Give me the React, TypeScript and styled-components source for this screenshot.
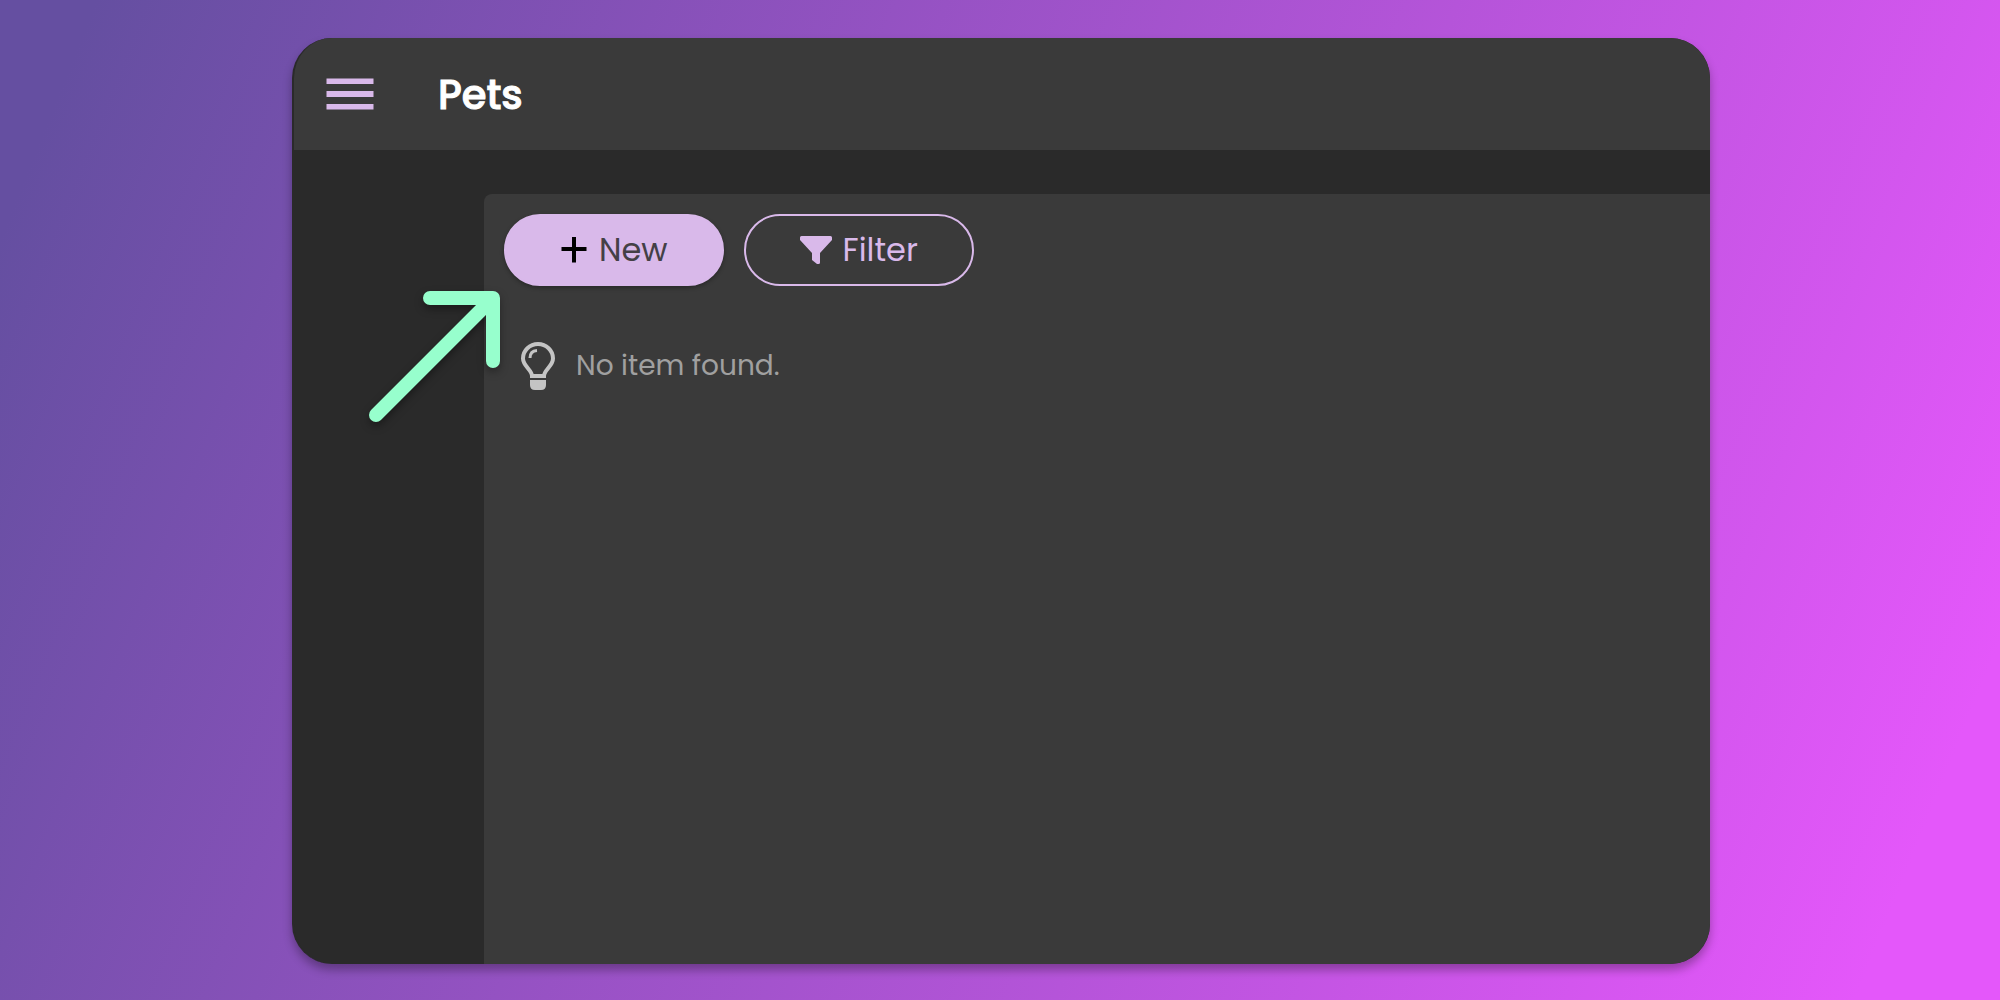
import React from "react";
import styled, { createGlobalStyle } from "styled-components";

const accent = "#d9b9ea";
const surface = "#3a3a3a";
const backdrop = "#2a2a2a";
const mint = "#97ffcd";

const GlobalStyle = createGlobalStyle`
  *, *::before, *::after { box-sizing: border-box; }
  body {
    margin: 0;
    font-family: Poppins, Inter, "Open Sans", sans-serif;
  }
`;

const Page = styled.main`
  display: flex;
  min-height: 100vh;
  padding: 38px 290px 36px 292px;
  background: linear-gradient(112deg, #654fa1 4%, #e457fa 94%);
`;

const Card = styled.section`
  position: relative;
  display: flex;
  flex: 1;
  flex-direction: column;
  min-width: 0;
  overflow: hidden;
  border-left: 2px solid ${backdrop};
  border-radius: 40px;
  background: ${backdrop};
  box-shadow: 0 6px 10px rgba(0, 0, 0, 0.3);
`;

const Header = styled.header`
  display: flex;
  align-items: center;
  gap: 64px;
  height: 112px;
  padding: 0 32px;
  background: ${surface};
`;

const MenuButton = styled.button`
  display: flex;
  padding: 0;
  border: 0;
  background: none;
  color: ${accent};
`;

const Title = styled.h1`
  margin: 0;
  padding-top: 2px;
  color: #ffffff;
  font-size: 40px;
  font-weight: 500;
  line-height: 60px;
  -webkit-text-stroke: 1px #ffffff;
`;

const Panel = styled.div`
  display: flex;
  flex: 1;
  flex-direction: column;
  gap: 56px;
  margin: 44px 0 0 190px;
  padding: 20px;
  border-top-left-radius: 8px;
  background: ${surface};
`;

const Toolbar = styled.div`
  display: flex;
  gap: 20px;
`;

const PillButton = styled.button<{ $filled?: boolean }>`
  display: flex;
  align-items: center;
  justify-content: center;
  gap: 11px;
  height: 72px;
  padding: 0 54px;
  border: 2px solid ${accent};
  border-radius: 36px;
  background: ${({ $filled }) => ($filled ? accent : "transparent")};
  box-shadow: ${({ $filled }) => ($filled ? "0 2px 4px rgba(0, 0, 0, 0.3)" : "none")};
  color: ${({ $filled }) => ($filled ? "#444046" : accent)};
  font-family: inherit;
  font-size: 32px;
  line-height: 48px;
`;

const EmptyState = styled.div`
  display: flex;
  align-items: center;
  gap: 20px;
  padding: 0 16px;
  color: #a0a0a0;
`;

const EmptyText = styled.p`
  margin: 0;
  font-size: 28px;
  line-height: 48px;
`;

const Pointer = styled.svg`
  position: absolute;
  top: 248px;
  left: 70px;
  filter: drop-shadow(0 4px 4px rgba(0, 0, 0, 0.35));
`;

export default function App() {
  return (
    <>
      <GlobalStyle />
      <Page>
        <Card>
          <Header>
            <MenuButton aria-label="Open menu">
              <svg width="48" height="34" viewBox="0 0 48 34" fill="currentColor" aria-hidden="true">
                <rect x="0.5" y="1.5" width="47" height="5.5" />
                <rect x="0.5" y="14" width="47" height="6" />
                <rect x="0.5" y="27" width="47" height="5.5" />
              </svg>
            </MenuButton>
            <Title>Pets</Title>
          </Header>
          <Panel>
            <Toolbar>
              <PillButton $filled>
                <svg width="28" height="26" viewBox="0 0 28 26" stroke="#000" strokeWidth="4" aria-hidden="true">
                  <path d="M14 0V25.500M1.500 12H26.500" />
                </svg>
                New
              </PillButton>
              <PillButton>
                <svg width="32" height="28" viewBox="0 0 32 28" fill="currentColor" aria-hidden="true">
                  <path d="M1.500 0H30.500Q32 0 32 1.500V4L20 17V26.500Q20 28 18.500 28H17L12 24V17L0 4V1.500Q0 0 1.500 0Z" />
                </svg>
                Filter
              </PillButton>
            </Toolbar>
            <EmptyState>
              <svg width="36" height="48" viewBox="0 0 36 48" fill="none" stroke="#c4c4c4" aria-hidden="true">
                <path strokeWidth="4" d="M12 34C12 28 3 24 3 16.500A15 14.500 0 0 1 33 16.500C33 24 24 28 24 34Z" />
                <path strokeWidth="3" d="M10 16Q10 9 17 8.500" />
                <path fill="#c4c4c4" stroke="none" d="M10 38H26V43Q26 48 21 48H15Q10 48 10 43Z" />
              </svg>
              <EmptyText>No item found.</EmptyText>
            </EmptyState>
          </Panel>
          <Pointer width="140" height="140" viewBox="0 0 140 140" fill="none" stroke={mint} strokeWidth="14" strokeLinecap="round" strokeLinejoin="round" aria-hidden="true">
            <path d="M12 129L129 12M66 12H129V75" />
          </Pointer>
        </Card>
      </Page>
    </>
  );
}
